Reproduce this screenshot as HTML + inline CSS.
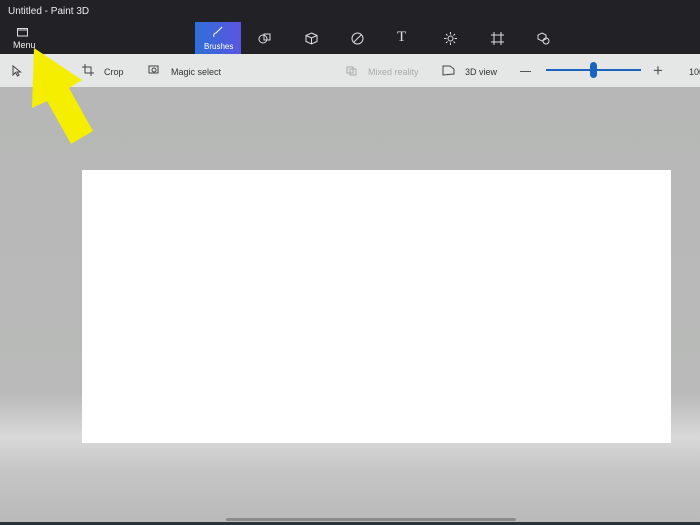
<!DOCTYPE html>
<html><head><style>
*{margin:0;padding:0;box-sizing:border-box}
body{width:700px;height:525px;overflow:hidden;position:relative;font-family:"Liberation Sans",sans-serif;background:#b5b6b5}
#top{position:absolute;left:0;top:0;width:700px;height:54px;background:#222226;color:#fff}
#bar{position:absolute;left:0;top:54px;width:700px;height:33px;background:#e5e6e6;font-size:9px;color:#333;box-shadow:0 1px 2px rgba(0,0,0,.15)}
#bg{position:absolute;left:0;top:87px;width:700px;height:438px;background:linear-gradient(#b6b7b6 0%,#b9bab9 70%,#d8d9d8 80%,#c4c5c4 88%,#b8b9b8 100%)}
#canvas{position:absolute;left:82px;top:170px;width:589px;height:273px;background:#fff}
.t{position:absolute;white-space:nowrap}
svg.i{position:absolute}
</style></head><body>
<div id="top">
<div class="t" style="left:8px;top:6px;font-size:10px;color:#eee">Untitled - Paint 3D</div>
<svg class="i" style="left:17px;top:27px" width="12" height="10"><rect x="0.5" y="1.5" width="10" height="7.5" fill="none" stroke="#ddd"/><line x1="0.5" y1="3" x2="10.5" y2="3" stroke="#ddd"/></svg>
<div class="t" style="left:13px;top:40px;font-size:9px;color:#eee">Menu</div>
<div style="position:absolute;left:195px;top:22px;width:46px;height:32px;background:linear-gradient(90deg,#2f6fd8,#5a55e0)"></div>
<svg class="i" style="left:211px;top:26px" width="14" height="12"><path d="M3 11 Q2 7 5 7 L11 1" stroke="#fff" fill="none"/></svg>
<div class="t" style="left:204px;top:42px;font-size:8px;color:#fff">Brushes</div>
<svg class="i" style="left:258px;top:32px" width="14" height="13" stroke="#ddd" fill="none"><circle cx="5" cy="7" r="4"/><rect x="6" y="2" width="6" height="6"/></svg>
<svg class="i" style="left:305px;top:32px" width="13" height="13" stroke="#ddd" fill="none"><path d="M6.5 1 L12 3.5 L12 9.5 L6.5 12 L1 9.5 L1 3.5Z M1 3.5 L6.5 6 L12 3.5 M6.5 6 V12"/></svg>
<svg class="i" style="left:351px;top:32px" width="13" height="13" stroke="#ddd" fill="none"><circle cx="6.5" cy="6.5" r="5.5"/><path d="M3 10 L10 3"/></svg>
<div class="t" style="left:397px;top:29px;font-size:15px;color:#ddd;font-family:'Liberation Serif',serif">T</div>
<svg class="i" style="left:444px;top:32px" width="13" height="13" stroke="#ddd" fill="none"><circle cx="6.5" cy="6.5" r="2.5"/><path d="M6.5 0V2.5M6.5 10.5V13M0 6.5H2.5M10.5 6.5H13M2 2L3.5 3.5M9.5 9.5L11 11M2 11L3.5 9.5M9.5 3.5L11 2"/></svg>
<svg class="i" style="left:491px;top:32px" width="13" height="13" stroke="#ddd" fill="none"><rect x="3" y="3" width="7" height="7"/><path d="M3 0V3M10 0V3M3 10V13M10 10V13M0 3H3M10 3H13M0 10H3M10 10H13"/></svg>
<svg class="i" style="left:537px;top:32px" width="13" height="13" stroke="#ddd" fill="none"><path d="M5 1 L9 3 L9 7 L5 9 L1 7 L1 3Z"/><circle cx="9" cy="9" r="3"/></svg>
</div>
<div id="bar">
<svg class="i" style="left:12px;top:11px" width="10" height="12" stroke="#444" fill="none"><path d="M1 1 L1 10 L3.5 7.5 L5.5 11 L7 10 L5 7 L8.5 7Z"/></svg>
<svg class="i" style="left:82px;top:10px" width="12" height="12" stroke="#444" fill="none"><path d="M3 0V9H12M0 3H9V12"/></svg>
<div class="t" style="left:104px;top:13px">Crop</div>
<svg class="i" style="left:148px;top:11px" width="13" height="10" stroke="#444" fill="none"><rect x="1" y="1" width="9" height="7"/><circle cx="6" cy="5" r="2"/></svg>
<div class="t" style="left:171px;top:13px">Magic select</div>
<svg class="i" style="left:346px;top:12px" width="11" height="10" stroke="#aaa" fill="none"><rect x="1" y="1" width="6" height="6"/><rect x="4" y="3" width="6" height="6"/></svg>
<div class="t" style="left:368px;top:13px;color:#aaa">Mixed reality</div>
<svg class="i" style="left:442px;top:11px" width="13" height="11" stroke="#444" fill="none"><path d="M1 1 L8 1 L12 4 L12 9 L1 10Z"/></svg>
<div class="t" style="left:465px;top:13px">3D view</div>
<div style="position:absolute;left:520px;top:17px;width:11px;height:1px;background:#555"></div>
<div style="position:absolute;left:546px;top:15px;width:95px;height:2px;background:#1a64c0"></div>
<div style="position:absolute;left:590px;top:8px;width:7px;height:16px;border-radius:4px;background:#1a64c0"></div>
<div class="t" style="left:653px;top:7px;font-size:17px;color:#555">+</div>
<div class="t" style="left:689px;top:13px">100%</div>
</div>
<div id="bg"></div>
<div id="canvas"></div>
<div style="position:absolute;left:226px;top:518px;width:290px;height:3px;background:#8c8c8c;border-radius:2px"></div>
<div style="position:absolute;left:0;top:522px;width:700px;height:3px;background:#2a3336"></div>
<svg class="i" style="left:0;top:0" width="120" height="160"><polygon points="34,48 82,80 69,88 93,131 71,144 47,101 32,108" fill="#f5ee00"/></svg>
</body></html>
